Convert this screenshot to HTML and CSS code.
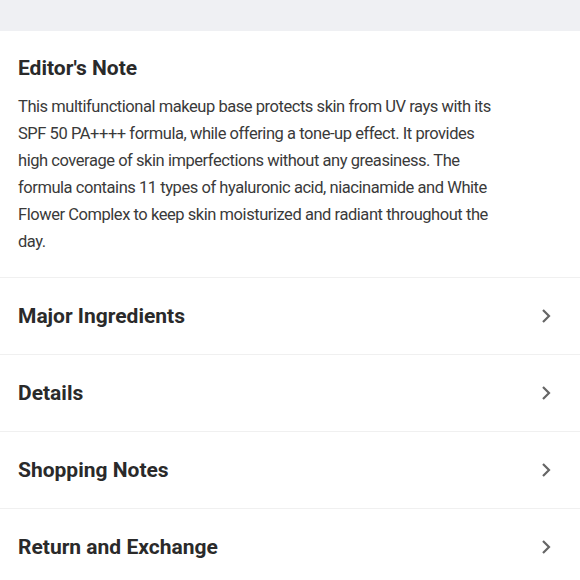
FILE: index.html
```html
<!DOCTYPE html>
<html lang="en">
<head>
    <meta charset="UTF-8">
    <meta name="viewport" content="width=device-width, initial-scale=1.0">
    <title>Product Info</title>
    <link rel="stylesheet" href="styles.css">
</head>
<body>
    <div class="topbar"></div>

    <section class="note">
        <h2>Editor's Note</h2>
        <p>This multifunctional makeup base protects skin from UV rays with its SPF 50 PA++++ formula, while offering a tone-up effect. It provides high coverage of skin imperfections without any greasiness. The formula contains 11 types of hyaluronic acid, niacinamide and White Flower Complex to keep skin moisturized and radiant throughout the day.</p>
    </section>

    <ul class="menu">
        <li class="menu-item">
            <span>Major Ingredients</span>
            <svg class="chevron" viewBox="0 0 10 16"><path d="M2 2l6 6-6 6"/></svg>
        </li>
        <li class="menu-item">
            <span>Details</span>
            <svg class="chevron" viewBox="0 0 10 16"><path d="M2 2l6 6-6 6"/></svg>
        </li>
        <li class="menu-item">
            <span>Shopping Notes</span>
            <svg class="chevron" viewBox="0 0 10 16"><path d="M2 2l6 6-6 6"/></svg>
        </li>
        <li class="menu-item">
            <span>Return and Exchange</span>
            <svg class="chevron" viewBox="0 0 10 16"><path d="M2 2l6 6-6 6"/></svg>
        </li>
    </ul>
</body>
</html>
```

FILE: styles.css
```css
body {
    font-family: Roboto, "Liberation Sans", sans-serif;
    margin: 0;
    padding: 0;
    background-color: #fff;
    color: #333;
}
.topbar {
    height: 31px;
    background-color: #eff0f3;
}
.note {
    padding: 24px 18px 22px;
    border-bottom: 1px solid #f0f0f0;
}
.note h2 {
    margin: 0 0 12px;
    font-size: 21px;
    line-height: 26px;
    font-weight: bold;
    color: #2a2a2a;
}
.note p {
    max-width: 478px;
    margin: 0;
    font-size: 16.5px;
    line-height: 27px;
    letter-spacing: -0.45px;
    color: #3a3a3a;
}
.menu {
    list-style: none;
    margin: 0;
    padding: 0;
}
.menu-item {
    display: flex;
    align-items: center;
    justify-content: space-between;
    height: 76px;
    padding: 0 29px 0 18px;
    border-bottom: 1px solid #f0f0f0;
    font-size: 21px;
    font-weight: bold;
    color: #2a2a2a;
}
.chevron {
    width: 10px;
    height: 16px;
    fill: none;
    stroke: #666;
    stroke-width: 2.2;
}
```
